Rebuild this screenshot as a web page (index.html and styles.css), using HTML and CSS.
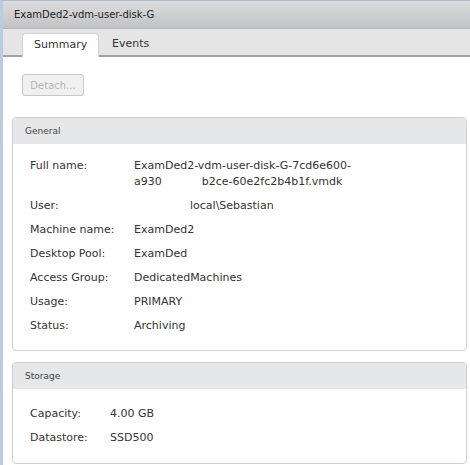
FILE: index.html
```html
<!DOCTYPE html>
<html>
	<head>
		<meta charset="UTF-8">
		<title>ExamDed2-vdm-user-disk-G</title>
		<link rel="stylesheet" href="styles.css">
	</head>
	<body>
		<div class="window">
			<div class="titlebar">ExamDed2-vdm-user-disk-G</div>
			<div class="tabs">
				<div class="tab active">Summary</div>
				<div class="tab">Events</div>
			</div>
			<div class="content">
				<div class="actions">
					<button class="btn" disabled>Detach...</button>
				</div>
				<div class="panel general">
					<div class="panel-head">General</div>
					<div class="panel-body">
						<div class="row">
							<div class="label">Full name:</div>
							<div class="value">ExamDed2-vdm-user-disk-G-7cd6e600-<br>a930<span class="gap"></span>b2ce-60e2fc2b4b1f.vmdk</div>
						</div>
						<div class="row">
							<div class="label">User:</div>
							<div class="value"><span class="indent">local\Sebastian</span></div>
						</div>
						<div class="row">
							<div class="label">Machine name:</div>
							<div class="value">ExamDed2</div>
						</div>
						<div class="row">
							<div class="label">Desktop Pool:</div>
							<div class="value">ExamDed</div>
						</div>
						<div class="row">
							<div class="label">Access Group:</div>
							<div class="value">DedicatedMachines</div>
						</div>
						<div class="row">
							<div class="label">Usage:</div>
							<div class="value">PRIMARY</div>
						</div>
						<div class="row">
							<div class="label">Status:</div>
							<div class="value">Archiving</div>
						</div>
					</div>
				</div>
				<div class="panel storage">
					<div class="panel-head">Storage</div>
					<div class="panel-body">
						<div class="row">
							<div class="label">Capacity:</div>
							<div class="value">4.00 GB</div>
						</div>
						<div class="row">
							<div class="label">Datastore:</div>
							<div class="value">SSD500</div>
						</div>
					</div>
				</div>
			</div>
		</div>
	</body>
</html>
```

FILE: styles.css
```css
body {
	margin: 0;
	background-color: #fff;
	font-family: "DejaVu Sans", Verdana, sans-serif;
	font-size: 11px;
	color: #333;
}
.window {
	height: 465px;
	border-left: 3px solid #b9cde2;
	border-top: 1px solid #a8bed5;
	box-sizing: border-box;
	overflow: hidden;
}
.titlebar {
	height: 27px;
	line-height: 27px;
	padding-left: 11px;
	font-size: 10px;
	color: #222;
	background: linear-gradient(#dcdcdc, #c2c3c6);
	border-bottom: 1px solid #b4b4b4;
}
.tabs {
	display: flex;
	align-items: flex-end;
	height: 26px;
	padding-left: 19px;
	background-color: #e5e5e5;
	border-bottom: 2px solid #a3a3a3;
}
.tab {
	height: 22px;
	line-height: 22px;
	padding: 0 13px;
	color: #333;
}
.tab.active {
	width: 52px;
	margin-bottom: -2px;
	height: 23px;
	padding: 0 12px 0 11px;
	background-color: #fff;
	border: 1px solid #d2d2d2;
	border-bottom: none;
	border-radius: 4px 4px 0 0;
}
.content {
	padding: 17px 3px 0 9px;
}
.actions {
	padding-left: 10px;
	height: 43px;
}
.btn {
	width: 62px;
	height: 22px;
	padding: 0;
	font-family: "DejaVu Sans", Verdana, sans-serif;
	font-size: 10px;
	color: #b4b4b4;
	background-color: #f0f0f0;
	border: 1px solid #c8c8c8;
	border-radius: 3px;
}
.panel {
	border: 1px solid #cfcfcf;
	border-radius: 4px;
	overflow: hidden;
	margin-bottom: 11px;
}
.panel-head {
	height: 26px;
	line-height: 26px;
	padding-left: 12px;
	font-size: 9px;
	color: #444;
	background-color: #e6e7e8;
}
.panel-body {
	padding: 14px 0 16px 17px;
}
.storage .panel-body {
	padding: 17px 0 17px 17px;
}
.row {
	display: flex;
	line-height: 16px;
	margin-bottom: 8px;
}
.row:last-child {
	margin-bottom: 0;
}
.label {
	width: 104px;
	flex-shrink: 0;
}
.storage .label {
	width: 80px;
}
.gap {
	display: inline-block;
	width: 40px;
}
.indent {
	padding-left: 56px;
}
```
